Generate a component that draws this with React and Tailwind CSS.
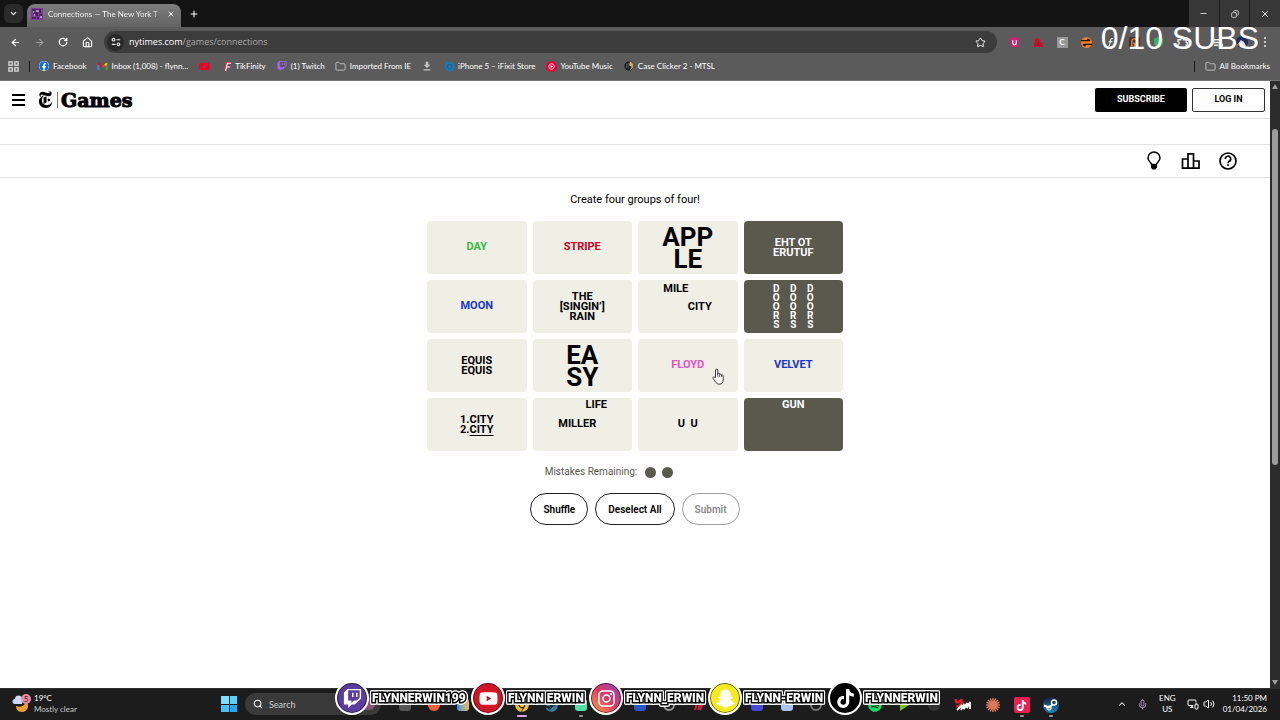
import { useState } from "react";
import {
  ArrowLeft,
  ArrowRight,
  ChevronDown,
  ChevronUp,
  Copy,
  Folder,
  House,
  Mic,
  Minus,
  MonitorSmartphone,
  Plus,
  RotateCw,
  Search,
  Star,
  Volume2,
  X,
} from "lucide-react";
import {
  FaChrome,
  FaFacebook,
  FaInstagram,
  FaSnapchatGhost,
  FaSpotify,
  FaSteam,
  FaTiktok,
  FaTwitch,
  FaYoutube,
} from "react-icons/fa";
import { SiNewyorktimes } from "react-icons/si";

const TILES = [
  { id: "day", text: "DAY", color: "text-[#32bc45]" },
  { id: "stripe", text: "STRIPE", color: "text-[#cc0022]" },
  { id: "apple", lines: ["APP", "LE"], kind: "big" },
  { id: "future", lines: ["EHT OT", "ERUTUF"], kind: "stack" },
  { id: "moon", text: "MOON", color: "text-[#1a35d8]" },
  { id: "rain", lines: ["THE", "[SINGIN’]", "RAIN"], kind: "stack" },
  { id: "mile", kind: "mile" },
  { id: "doors", kind: "doors" },
  { id: "equis", lines: ["EQUIS", "EQUIS"], kind: "stack" },
  { id: "easy", lines: ["EA", "SY"], kind: "big" },
  { id: "floyd", text: "FLOYD", color: "text-[#e950c0]" },
  { id: "velvet", text: "VELVET", color: "text-[#1a35d8]" },
  { id: "city", kind: "city" },
  { id: "miller", kind: "miller" },
  { id: "uu", text: "U\u00a0\u00a0U" },
  { id: "gun", kind: "gun" },
];

const SOCIALS = [
  { name: "FLYNNERWIN199", bg: "bg-[#5b3d9b]", Icon: FaTwitch },
  { name: "FLYNN ERWIN", bg: "bg-[#d01525]", Icon: FaYoutube },
  {
    name: "FLYNN_ERWIN",
    bg: "bg-gradient-to-tr from-[#f9a040] via-[#e03560] to-[#8a30c0]",
    Icon: FaInstagram,
  },
  { name: "FLYNN-ERWIN", bg: "bg-[#f5ec20]", Icon: FaSnapchatGhost },
  { name: "FLYNNERWIN", bg: "bg-black", Icon: FaTiktok },
];

function PuzzleIcon() {
  return (
    <svg viewBox="0 0 12 12" className="size-3">
      <rect width="12" height="12" fill="#7d3c98" />
      <path d="M1 2h6M9 1v4M2 5h4v3M8 7h3M1 10h4M7 9v2" stroke="#1d1024" strokeWidth="1.2" fill="none" />
      <path d="M5 3h3M3 7h1M9 9h2M2 4h1" stroke="#f3dcff" strokeWidth="1.2" fill="none" />
    </svg>
  );
}

function TuneIcon() {
  return (
    <svg viewBox="0 0 12 12" className="size-[10px]" fill="none" stroke="#e8e8e8" strokeWidth="1.3">
      <circle cx="3" cy="3.2" r="1.6" />
      <path d="M6.5 3.2H11M1 8.8h4.5" />
      <circle cx="9" cy="8.8" r="1.6" />
    </svg>
  );
}

function AppsIcon() {
  return (
    <svg viewBox="0 0 12 12" className="size-[11px]" fill="none" stroke="#e8e8e8" strokeWidth="1.3">
      <rect x="1" y="1" width="3.6" height="3.6" />
      <rect x="7.4" y="1" width="3.6" height="3.6" />
      <rect x="1" y="7.4" width="3.6" height="3.6" />
      <rect x="7.4" y="7.4" width="3.6" height="3.6" />
    </svg>
  );
}

function MailIcon() {
  return (
    <svg viewBox="0 0 12 10" className="h-[9px] w-[11px]" fill="none" strokeWidth="2.2">
      <path d="M1.500 9V2" stroke="#4285f4" />
      <path d="M10.500 9V2" stroke="#34a853" />
      <path d="m1 1.500 5 4" stroke="#c5221f" />
      <path d="m6 5.500 3-2.500" stroke="#ea4335" />
      <path d="m8.500 3.500 2.500-2" stroke="#fbbc04" />
    </svg>
  );
}

function TitleBar() {
  return (
    <div className="flex h-[27px] items-end bg-[#141414] pl-1">
      <button aria-label="Search tabs" className="mb-1 flex size-[19px] items-center justify-center rounded-md bg-[#2b2b2b]">
        <ChevronDown size={9} strokeWidth={3} />
      </button>
      <div className="ml-1 flex h-[23px] w-[154px] items-center rounded-t-lg bg-gradient-to-b from-[#7c7c7c] to-[#636363] pr-[6px] pb-[3px] pl-1">
        <PuzzleIcon />
        <span className="ml-[5px] flex-1 bg-gradient-to-r from-white from-90% to-transparent bg-clip-text text-[8px] whitespace-nowrap text-transparent">
          Connections — The New York T
        </span>
        <button aria-label="Close tab" className="ml-1">
          <X size={8} strokeWidth={3} />
        </button>
      </div>
      <button aria-label="New tab" className="mb-2 ml-2">
        <Plus size={10} strokeWidth={2.5} />
      </button>
      <div className="ml-auto flex h-full w-[91px] divide-x divide-[#1c1c1c] bg-[#383838]">
        <button aria-label="Minimize" className="flex flex-1 items-center justify-center">
          <Minus size={9} />
        </button>
        <button aria-label="Restore" className="flex flex-1 items-center justify-center">
          <Copy size={8} className="-scale-x-100" />
        </button>
        <button aria-label="Close" className="flex flex-1 items-center justify-center">
          <X size={10} />
        </button>
      </div>
    </div>
  );
}

function ExtensionIcons() {
  const slot = "flex w-6 items-center justify-center";
  return (
    <div className="ml-[5px] flex items-center">
      <span className={slot}>
        <svg viewBox="0 0 12 12" className="size-[11px]">
          <path d="M1 1.500 6 0l5 1.500v4C11 9 8 11 6 12 4 11 1 9 1 5.500z" fill="#d81b70" />
          <path d="M4 3.500v3a2 2 0 0 0 4 0v-3" stroke="#fff" strokeWidth="1.400" fill="none" />
        </svg>
      </span>
      <span className={slot}>
        <svg viewBox="0 0 12 12" className="size-[11px]">
          <path d="M1 11V7l1-1V2l3-1 3 2v3l3 1v4z" fill="#c8102e" />
          <path d="M4 9h4M6 5v2" stroke="#701020" />
        </svg>
      </span>
      <span className={slot}>
        <span className="flex size-[11px] items-center justify-center bg-[#9a9a9a] text-[8px] font-bold">C</span>
      </span>
      <span className={slot}>
        <svg viewBox="0 0 12 12" className="size-[11px]">
          <circle cx="6" cy="6" r="6" fill="#f08020" />
          <path d="M0 4h9M7 2l3 2M3 8h9M5 10 2 8" stroke="#221404" strokeWidth="1.500" fill="none" />
        </svg>
      </span>
      <span className={slot}>
        <svg viewBox="0 0 12 12" className="size-[11px]" fill="none" stroke="#eee" strokeWidth="1.200">
          <path d="M8.500 2C6 1 6 4 5.500 6.500S4.500 11 3 10M4 5h4" />
        </svg>
      </span>
      <span className={slot}>
        <svg viewBox="0 0 12 12" className="size-[11px]">
          <rect width="12" height="12" rx="2" fill="#4a3020" />
          <path d="M3 10V5a3 3 0 0 1 6 0v1a2 2 0 0 1-4 0M6 8v3" stroke="#f08030" strokeWidth="1.500" fill="none" />
        </svg>
      </span>
      <span className={slot}>
        <svg viewBox="0 0 12 12" className="size-[11px]">
          <path d="M1 1.500 6 0l5 1.500v4C11 9 8 11 6 12 4 11 1 9 1 5.500z" fill="#38b35a" />
        </svg>
      </span>
      <span className={slot}>
        <svg viewBox="0 0 12 12" className="size-[11px]" fill="none" stroke="#eee" strokeWidth="1.400">
          <path d="M1 3h3a1.500 1.500 0 0 1 3 0h3v3a1.500 1.500 0 0 1 0 3v2H1V8a1.500 1.500 0 0 0 0-3z" />
        </svg>
      </span>
      <span className="ml-3 flex w-6 items-center justify-center">
        <svg viewBox="0 0 12 12" className="size-[11px]" fill="none" stroke="#eee" strokeWidth="1.400">
          <path d="M1 3h8M1 6h6M1 9h5" />
          <circle cx="9" cy="9" r="1.500" />
        </svg>
      </span>
      <span className={slot}>
        <svg viewBox="0 0 12 12" className="size-3">
          <circle cx="6" cy="6" r="6" fill="#1c2b5c" />
          <path d="M1 9 5 4l3 2 2 4-4 2z" fill="#e8dcd4" />
          <path d="m1 9 2-2 1 4z" fill="#c84a30" />
        </svg>
      </span>
      <button aria-label="Browser menu" className="flex w-[22px] items-center justify-center">
        <svg viewBox="0 0 4 12" className="h-3 w-1" fill="#eee">
          <circle cx="2" cy="2" r="1" />
          <circle cx="2" cy="6" r="1" />
          <circle cx="2" cy="10" r="1" />
        </svg>
      </button>
    </div>
  );
}

function AddressBar() {
  const nav = "flex w-6 items-center justify-center";
  return (
    <div className="flex h-[30px] items-center pr-1 pl-[3px]">
      <button aria-label="Back" className={nav}>
        <ArrowLeft size={11} strokeWidth={2.5} />
      </button>
      <button aria-label="Forward" className={`${nav} text-[#9b9b9b]`}>
        <ArrowRight size={11} strokeWidth={2.5} />
      </button>
      <button aria-label="Reload" className={nav}>
        <RotateCw size={10} strokeWidth={3} />
      </button>
      <button aria-label="Home" className={nav}>
        <House size={11} strokeWidth={2.5} />
      </button>
      <div className="ml-[5px] flex h-[22px] flex-1 items-center rounded-full bg-[#3c3c3c] pr-[11px] pl-[3px]">
        <span className="flex size-[17px] items-center justify-center rounded-full bg-[#292929]">
          <TuneIcon />
        </span>
        <p className="ml-[5px] flex-1 font-['Open_Sans',sans-serif] text-[9px] text-[#a9a9a9]">
          <span className="text-white">nytimes.com</span>/games/connections
        </p>
        <button aria-label="Bookmark this page">
          <Star size={11} />
        </button>
      </div>
      <ExtensionIcons />
    </div>
  );
}

function Bookmark({ icon, label }) {
  return (
    <a href="#" className="flex items-center gap-[3px]">
      <span className="flex w-3 justify-center">{icon}</span>
      {label && <span className="whitespace-nowrap">{label}</span>}
    </a>
  );
}

function BookmarksBar() {
  return (
    <div className="flex h-6 items-center gap-[10px] border-b border-[#777] pr-[10px] pb-[5px] pl-2 text-[8px]">
      <AppsIcon />
      <span className="-mr-[2px] h-[11px] w-px bg-[#1c1c1c]" />
      <Bookmark icon={<FaFacebook size={10} className="rounded-full bg-white text-[#0b6cf0]" />} label="Facebook" />
      <Bookmark icon={<MailIcon />} label="Inbox (1,008) - flynn..." />
      <Bookmark icon={<FaYoutube size={11} className="text-[#f00028]" />} />
      <Bookmark
        icon={
          <svg viewBox="0 0 12 12" className="size-[11px]" fill="none" strokeWidth="1.800">
            <path d="M4 11 6 2h5M5 6.500h5" stroke="#f02850" />
            <path d="M5 11 7 2.500h4M6 6.500h4" stroke="#fff" strokeWidth="1.200" />
          </svg>
        }
        label="TikFinity"
      />
      <Bookmark icon={<FaTwitch size={10} className="text-[#a865ff]" />} label="(1) Twitch" />
      <Bookmark icon={<Folder size={11} className="text-[#c5c5c5]" />} label="Imported From IE" />
      <Bookmark
        icon={
          <svg viewBox="0 0 12 12" className="size-[10px]" fill="#c5c5c5">
            <path d="M4.500 1h3v3.500H10L6 8.500 2 4.500h2.500zM2 10h8v1.500H2z" />
          </svg>
        }
      />
      <Bookmark
        icon={
          <svg viewBox="0 0 12 12" className="size-[11px]">
            <circle cx="6" cy="6" r="5.500" fill="#1f75b0" />
            <circle cx="6" cy="6" r="2.500" fill="none" stroke="#185f92" />
          </svg>
        }
        label="iPhone 5 – iFixit Store"
      />
      <Bookmark
        icon={
          <svg viewBox="0 0 12 12" className="size-[11px]">
            <circle cx="6" cy="6" r="6" fill="#e6003c" />
            <circle cx="6" cy="6" r="3" fill="none" stroke="#fff" strokeWidth=".8" />
            <path d="m5 4.300 2.800 1.700L5 7.700z" fill="#fff" />
          </svg>
        }
        label="YouTube Music"
      />
      <Bookmark
        icon={
          <svg viewBox="0 0 12 12" className="size-[10px]">
            <circle cx="6" cy="6" r="5.500" fill="#141414" />
            <path d="M7 1c6 1 5 9 0 10l2-4-3-2z" fill="#c9b15c" />
            <path d="M5 2v8M3 3v5" stroke="#597078" />
          </svg>
        }
        label="Case Clicker 2 - MTSL"
      />
      <span className="ml-auto h-[11px] w-px bg-[#1c1c1c]" />
      <Bookmark icon={<Folder size={11} className="text-[#c5c5c5]" />} label="All Bookmarks" />
    </div>
  );
}

function TileContent({ tile }) {
  switch (tile.kind) {
    case "big":
      return (
        <span className="text-[26px] leading-[22px]">
          {tile.lines.map((line) => (
            <span key={line} className="block">
              {line}
            </span>
          ))}
        </span>
      );
    case "stack":
      return (
        <span className="leading-[10px]">
          {tile.lines.map((line, i) => (
            <span key={i} className="block">
              {line}
            </span>
          ))}
        </span>
      );
    case "mile":
      return (
        <span className="flex flex-col gap-1 self-start pt-[2px] leading-[14px]">
          <span className="pr-6">MILE</span>
          <span className="pl-6">CITY</span>
        </span>
      );
    case "miller":
      return (
        <span className="flex flex-col gap-[5px] self-start leading-[14px]">
          <span className="pl-7">LIFE</span>
          <span className="pr-[10px]">MILLER</span>
        </span>
      );
    case "gun":
      return <span className="self-start leading-[14px]">GUN</span>;
    case "city":
      return (
        <span className="leading-[10px]">
          <span className="block">1.CITY</span>
          <span className="block">
            2.<span className="underline decoration-1 underline-offset-2">CITY</span>
          </span>
        </span>
      );
    case "doors":
      return (
        <span className="flex gap-[10px] text-[10px] leading-[9px]">
          {[0, 1, 2].map((col) => (
            <span key={col} className="flex w-[7px] flex-col items-center">
              {"DOORS".split("").map((ch, i) => (
                <span key={i}>{ch}</span>
              ))}
            </span>
          ))}
        </span>
      );
    default:
      return <span className={tile.color}>{tile.text}</span>;
  }
}

function HandCursor() {
  return (
    <svg viewBox="0 0 12 17" className="absolute top-[29px] left-[74px] h-[17px] w-3">
      <path
        d="M3.500 9.500V2a1.200 1.200 0 0 1 2.300 0v4.500V5.800a1 1 0 0 1 1.900.2v.7a1 1 0 0 1 1.800.2v.7a.9.9 0 0 1 1.700.3V12c0 2.500-1.400 4.200-3.700 4.200-2.200 0-3.200-1-4.200-2.700L1 10.200c-.4-1 .7-1.700 1.500-1z"
        fill="#fff"
        stroke="#222"
        strokeWidth=".9"
      />
      <path d="M5.800 6.500V9M7.700 6.800V9M9.500 7.500V9" stroke="#222" strokeWidth=".7" />
    </svg>
  );
}

function Board() {
  const [selected, setSelected] = useState(["future", "doors", "gun"]);

  const toggle = (id) =>
    setSelected((prev) =>
      prev.includes(id) ? prev.filter((x) => x !== id) : prev.length < 4 ? [...prev, id] : prev
    );

  const pill = "h-8 rounded-full border px-3 text-[10px] font-semibold";

  return (
    <main className="flex flex-col items-center pt-[14px]">
      <h1 className="text-[11px] leading-4">Create four groups of four!</h1>
      <div className="mt-[13px] grid w-full max-w-[416px] grid-cols-4 gap-[6px]">
        {TILES.map((tile) => {
          const on = selected.includes(tile.id);
          return (
            <button
              key={tile.id}
              aria-pressed={on}
              onClick={() => toggle(tile.id)}
              className={`relative flex h-[53px] items-center justify-center rounded-[4px] text-[11px] font-bold ${
                on ? "bg-[#5a594e] text-white" : "bg-[#efefe6] text-black"
              }`}
            >
              <TileContent tile={tile} />
              {tile.id === "floyd" && <HandCursor />}
            </button>
          );
        })}
      </div>
      <div className="mt-[13px] flex items-center gap-2 text-[10px] leading-4 text-[#5a594e]">
        Mistakes Remaining:
        <span className="flex w-20 gap-[6px]">
          <span className="size-[11px] rounded-full bg-[#5a594e]" />
          <span className="size-[11px] rounded-full bg-[#5a594e]" />
        </span>
      </div>
      <div className="mt-[13px] flex gap-[7px]">
        <button className={`${pill} border-[#222]`}>Shuffle</button>
        <button className={`${pill} border-[#222]`} onClick={() => setSelected([])}>
          Deselect All
        </button>
        <button className={`${pill} border-[#a0a0a0] text-[#8a8a8a]`} disabled>
          Submit
        </button>
      </div>
    </main>
  );
}

function GamePage() {
  return (
    <div className="flex min-w-0 flex-1 flex-col bg-white font-['Roboto',sans-serif] text-black">
      <header className="flex h-[38px] items-center border-b border-[#e2e2e2] pr-[5px] pl-3">
        <button aria-label="Open menu" className="flex w-[13px] flex-col gap-[3px]">
          <span className="h-[2px] bg-black" />
          <span className="h-[2px] bg-black" />
          <span className="h-[2px] bg-black" />
        </button>
        <a href="#" className="ml-3 flex items-center">
          <SiNewyorktimes size={17} />
          <span className="ml-[3px] h-4 w-px bg-[#777]" />
          <span className="ml-[3px] font-['DejaVu_Serif',serif] text-[19px] leading-6 font-bold [-webkit-text-stroke:1px_black]">
            Games
          </span>
        </a>
        <button className="ml-auto h-6 w-[92px] rounded-[2px] bg-black text-[9px] font-bold text-white">SUBSCRIBE</button>
        <button className="ml-[5px] h-6 w-[73px] rounded-[2px] border border-[#333] text-[9px] font-bold">LOG IN</button>
      </header>
      <div className="h-[26px] border-b border-[#e2e2e2]" />
      <div className="flex h-[33px] items-center justify-end gap-[17px] border-b border-[#e2e2e2] pr-8">
        <button aria-label="Hints">
          <svg viewBox="0 0 20 20" className="size-5">
            <path d="M7.500 13.500c0-2-3.500-3-3.500-6.500a6 6 0 0 1 12 0c0 3.500-3.500 4.500-3.500 6.500z" fill="none" stroke="#000" strokeWidth="1.500" />
            <path d="M7 13h6v3.500l-1.500 2h-3L7 16.500z" />
          </svg>
        </button>
        <button aria-label="Statistics">
          <svg viewBox="0 0 20 20" className="size-5" fill="none" stroke="#000" strokeWidth="1.700">
            <path d="M1.500 8h5.500v9.200H1.500zM7 2.800h5.500v14.400H7zM12.500 10h5.500v7.200h-5.500z" />
          </svg>
        </button>
        <button aria-label="Help">
          <svg viewBox="0 0 20 20" className="size-5" fill="none" stroke="#000" strokeWidth="1.700">
            <circle cx="10" cy="10" r="8" />
            <path d="M7.300 8a2.700 2.700 0 1 1 4 2.300c-.9.500-1.300 1-1.300 1.900M10 13.300v1.700" />
          </svg>
        </button>
      </div>
      <Board />
    </div>
  );
}

function Scrollbar() {
  return (
    <div className="flex w-[10px] flex-col items-center bg-[#2c2c2c] py-[3px]">
      <svg viewBox="0 0 6 5" className="h-[5px] w-[6px]" fill="#a0a0a0">
        <path d="M3 0 6 5H0z" />
      </svg>
      <div className="mt-10 h-[336px] w-[6px] rounded-full bg-[#9c9c9c]" />
      <svg viewBox="0 0 6 5" className="mt-auto h-[5px] w-[6px]" fill="#a0a0a0">
        <path d="M3 5 0 0h6z" />
      </svg>
    </div>
  );
}

function SmIcon() {
  return (
    <svg viewBox="0 0 18 16" className="h-4 w-[18px]" fill="none">
      <path d="M2 2c-1 4 2 5 6 0M2 9c3 1 5-1 7-5" stroke="#d81e2c" strokeWidth="2.600" />
      <path d="m3 13 5-5M7 13l3-6v5l3-6v5l3-6v7" stroke="#fff" strokeWidth="1.800" />
    </svg>
  );
}

function BurstIcon() {
  return (
    <svg viewBox="0 0 16 16" className="size-4" stroke="#d97757" strokeWidth="1.500">
      <path d="M8 1v14M1 8h14M3 3l10 10M13 3 3 13M5.300 1.500l5.400 13M10.700 1.500l-5.400 13M1.500 5.300l13 5.400M14.500 5.300l-13 5.400" />
    </svg>
  );
}

const square = "size-3 rounded-[3px]";

// entries without an icon keep an empty slot in the row
const PINNED = [
  { icon: <span className={`${square} bg-[#555]`} /> },
  { icon: <span className={`${square} rounded-full bg-[#e8603c]`} /> },
  { icon: <span className={`${square} bg-gradient-to-r from-[#2c8be8] to-[#f0b830]`} /> },
  {},
  { icon: <FaChrome size={14} className="text-[#f0c030]" />, bar: "w-[10px] bg-[#d8a0e8]" },
  { icon: <FaSteam size={13} className="text-[#3a7da8]" /> },
  { icon: <span className={`${square} bg-[#4fe0a8]`} />, bar: "w-1 bg-[#999]" },
  {},
  { icon: <span className={`${square} bg-[#2458c8]`} /> },
  { icon: <span className={`${square} rounded-full border-2 border-[#999]`} /> },
  {
    icon: (
      <svg viewBox="0 0 12 12" className="size-3" fill="none" stroke="#d02040" strokeWidth="2">
        <path d="m2 11 2-7 3 1-2 6M7 11l3-7" />
      </svg>
    ),
  },
  {},
  { icon: <span className={`${square} bg-[#4547d8]`} /> },
  { icon: <span className={`${square} bg-[#a9c4f0]`} /> },
  { icon: <span className={`${square} rounded-full border-2 border-[#777]`} /> },
  {},
  { icon: <FaSpotify size={14} className="text-[#1ed760]" /> },
  {
    icon: (
      <svg viewBox="0 0 12 12" className="size-3" fill="#7ac020">
        <path d="m2 0 9 6-9 6z" />
      </svg>
    ),
  },
  { icon: <span className={`${square} rounded-full bg-[#333]`} /> },
  { icon: <SmIcon /> },
  { icon: <BurstIcon /> },
  {
    icon: (
      <span className="flex size-4 items-center justify-center rounded-[2px] bg-[#ee1d52]">
        <FaTiktok size={11} />
      </span>
    ),
    bar: "w-1 bg-[#999]",
  },
  {
    icon: (
      <span className="flex size-4 items-center justify-center rounded-full bg-gradient-to-b from-[#14203c] to-[#1a86c0]">
        <svg viewBox="0 0 16 16" className="size-4" fill="none" stroke="#fff">
          <circle cx="11" cy="5.500" r="2.500" strokeWidth="1.500" />
          <path d="m1 8.500 5 2 3.500-3" strokeWidth="2.200" />
          <circle cx="6" cy="11" r="2" strokeWidth="1.200" />
        </svg>
      </span>
    ),
    bar: "w-1 bg-[#999]",
  },
];

function Taskbar() {
  return (
    <footer className="flex h-8 items-center border-t border-[#303030] bg-[#1c1c1c] pr-[13px] pb-px pl-3 text-[8px] leading-[11px]">
      <svg viewBox="0 0 20 20" className="size-5">
        <path d="M4 12c6 2 9-1 10-5 4 4 2 11-4 11-4 0-6-3-6-6z" fill="#f0a030" />
        <path d="M3 10a2.500 2.500 0 0 1 0-5 3.500 3.500 0 0 1 7 0v5z" fill="#c8dcf8" />
        <circle cx="14" cy="5" r="5" fill="#f08aa0" />
        <text x="14" y="8" fontSize="8" textAnchor="middle" fill="#222">
          5
        </text>
      </svg>
      <div className="ml-[2px] w-[187px]">
        <p>19°C</p>
        <p className="text-[#c8c8c8]">Mostly clear</p>
      </div>
      <button aria-label="Start" className="grid size-4 grid-cols-2 gap-px">
        <span className="bg-[#7fe0fb]" />
        <span className="bg-[#5bd0fa]" />
        <span className="bg-[#45c2f8]" />
        <span className="bg-[#22a8f2]" />
      </button>
      <label className="ml-2 flex h-[22px] w-[136px] items-center rounded-full bg-[#3a3a3a] pl-2">
        <Search size={10} strokeWidth={2.5} />
        <input
          type="text"
          aria-label="Search"
          placeholder="Search"
          className="ml-[6px] w-[86px] text-[9px] outline-none placeholder:text-[#d0d0d0]"
        />
        <span className="h-3 w-5 rounded-full bg-gradient-to-r from-[#35507a] to-[#a05070]" />
      </label>
      <div className="ml-[9px] flex w-[676px]">
        {PINNED.map(({ icon, bar }, i) => (
          <span key={i} className="flex h-[26px] flex-1 flex-col items-center justify-end">
            <span className="flex flex-1 items-center pt-1">{icon}</span>
            <span className={`h-[2px] rounded-full ${bar ?? ""}`} />
          </span>
        ))}
      </div>
      <div className="ml-auto flex items-center">
        <ChevronUp size={10} strokeWidth={2.5} />
        <Mic size={11} className="ml-[10px] text-[#b9a3c8]" />
        <div className="ml-[11px] text-center">
          <p>ENG</p>
          <p>US</p>
        </div>
        <MonitorSmartphone size={12} className="ml-[11px]" />
        <Volume2 size={12} className="ml-1" />
        <div className="ml-2 text-right">
          <p>11:50 PM</p>
          <p>01/04/2026</p>
        </div>
      </div>
    </footer>
  );
}

function SocialBanner() {
  return (
    <div className="pointer-events-none absolute bottom-[5px] left-[335px] grid grid-cols-[136px_118px_119px_120px_100px] font-['Roboto',sans-serif]">
      {SOCIALS.map(({ name, bg, Icon }) => (
        <div key={name} className="flex items-center gap-[3px]">
          <span className={`relative z-10 flex size-[34px] shrink-0 items-center justify-center rounded-full border-2 border-white ring-1 ring-black/60 ring-inset ${bg}`}>
            <Icon size={19} />
          </span>
          <span className="text-[12px] leading-5 font-black whitespace-nowrap text-white [filter:drop-shadow(1px_0_white)_drop-shadow(-1px_0_white)_drop-shadow(0_1px_white)_drop-shadow(0_-1px_white)] [paint-order:stroke_fill] [-webkit-text-stroke:3px_black]">
            {name}
          </span>
        </div>
      ))}
    </div>
  );
}

export default function App() {
  return (
    <div className="relative flex h-screen flex-col overflow-hidden bg-[#5b5b5b] font-['Lato',sans-serif] text-white">
      <TitleBar />
      <AddressBar />
      <BookmarksBar />
      <div className="flex min-h-0 flex-1">
        <GamePage />
        <Scrollbar />
      </div>
      <Taskbar />
      <SocialBanner />
      {/* Stream sub counter */}
      <p className="pointer-events-none absolute top-5 right-[21px] font-['Liberation_Sans',sans-serif] text-[32px] leading-9">
        0/10 SUBS
      </p>
    </div>
  );
}
